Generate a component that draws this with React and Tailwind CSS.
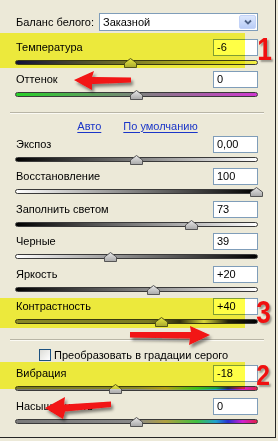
import React from 'react'

const rowsTop = [
  { label: 'Температура', value: '-6', pos: 130, h: 'h-[32px]', track: 'bg-[linear-gradient(to_right,#1010d0,#f4f040)]' },
  { label: 'Оттенок', value: '0', pos: 136, h: 'h-[33px]', track: 'bg-[linear-gradient(to_right,#28d028,#d038d0)]' },
]

const rowsMid = [
  { label: 'Экспоз', value: '0,00', pos: 136, h: 'h-[32px]', track: 'bg-[linear-gradient(to_right,#000,#fff)]' },
  { label: 'Восстановление', value: '100', pos: 256, h: 'h-[33px]', track: 'bg-[linear-gradient(to_right,#fff,#000)]' },
  { label: 'Заполнить светом', value: '73', pos: 191, h: 'h-[32px]', track: 'bg-[linear-gradient(to_right,#000,#fff)]' },
  { label: 'Черные', value: '39', pos: 110, h: 'h-[33px]', track: 'bg-[linear-gradient(to_right,#fff,#000)]' },
  { label: 'Яркость', value: '+20', pos: 153, h: 'h-[32px]', track: 'bg-[linear-gradient(to_right,#000,#fff)]' },
  { label: 'Контрастность', value: '+40', pos: 161, h: 'h-[33px]', track: 'bg-[linear-gradient(to_right,#8a8a8a,#7a7a7a_55%,#303030_68%,#d8d8d8_78%,#202020_88%,#000)]' },
]

const rowsBottom = [
  { label: 'Вибрация', value: '-18', pos: 115, h: 'h-[33px]', track: 'bg-[linear-gradient(to_right,#7a7a7a,#8a8a8a_50%,#b0a040_62%,#40c040_75%,#20a0d0_83%,#2830d0_88%,#d020d0_94%,#e02048)]' },
  { label: 'Насыщенность', value: '0', pos: 136, h: 'h-[33px]', track: 'bg-[linear-gradient(to_right,#7a7a7a,#8a8a8a_50%,#b0a040_62%,#40c040_75%,#20a0d0_83%,#2830d0_88%,#d020d0_94%,#e02048)]' },
]

function Thumb({ pos }) {
  return (
    <svg
      width="13"
      height="10"
      viewBox="0 0 13 10"
      className="absolute top-[2px]"
      style={{ left: pos - 15 - 6 }}
    >
      <defs>
        <linearGradient id="thumbfill" x1="0" y1="0" x2="0" y2="1">
          <stop offset="0" stopColor="#e8e8e8" />
          <stop offset="1" stopColor="#a8a8a8" />
        </linearGradient>
      </defs>
      <polygon points="0.5,5 6.5,0.5 12.5,5 12.5,9.5 0.5,9.5" fill="url(#thumbfill)" stroke="#555" strokeWidth="1" strokeLinejoin="round" />
    </svg>
  )
}

function SliderRow({ label, value, pos, h, track }) {
  return (
    <div className={`flex flex-col ${h}`}>
      <div className="flex items-center h-[17px] pl-[16px]">
        <span className="whitespace-nowrap">{label}</span>
        <div className="ml-auto mr-[17px] w-[45px] h-[17px] border border-[#7f9db9] bg-white pl-[3px] leading-[15px]">
          {value}
        </div>
      </div>
      <div className="relative ml-[15px] w-[243px] h-[12px]">
        <div className={`absolute left-0 right-0 top-[4px] h-[5px] rounded-full border border-[#3a3a3a] ${track}`} />
        <Thumb pos={pos} />
      </div>
    </div>
  )
}

function Separator() {
  return <div className="ml-[10px] w-[254px] h-[2px] border-t border-[#b8b5a6] border-b border-b-[#fbfaf4]" />
}

function App() {
  return (
    <div className="w-[278px] h-[441px] bg-[#ece9d8] font-['Liberation_Sans',sans-serif] text-[11px] text-black overflow-hidden">
      <div className="relative w-[276px] h-[438px] border-r border-b border-[#262626]">
        <div className="flex flex-col pt-[13px]">
          <div className="flex items-center h-[18px] pl-[16px]">
            <span className="whitespace-nowrap">Баланс белого:</span>
            <div className="ml-auto mr-[17px] w-[159px] shrink-0 h-[18px] border border-[#7f9db9] bg-white flex items-center pl-[3px] pr-[1px]">
              <span>Заказной</span>
              <div className="ml-auto w-[17px] h-[14px] rounded-[2px] border border-[#c3d3f8] bg-[linear-gradient(to_bottom,#dce7fd,#b9cdf7)] flex items-center justify-center">
                <svg width="8" height="6" viewBox="0 0 8 6">
                  <path d="M1 1.5 L4 4.5 L7 1.5" fill="none" stroke="#4d6185" strokeWidth="1.8" />
                </svg>
              </div>
            </div>
          </div>

          <div className="mt-[8px] flex flex-col">
            {rowsTop.map((r) => (
              <SliderRow key={r.label} {...r} />
            ))}
          </div>

          <div className="mt-[8px]">
            <Separator />
          </div>

          <div className="h-[22px] pt-[2px] flex items-center justify-center gap-[22px] text-[#1a35c8]">
            <span className="underline underline-offset-2">Авто</span>
            <span className="underline underline-offset-2">По умолчанию</span>
          </div>

          <div className="flex flex-col">
            {rowsMid.map((r) => (
              <SliderRow key={r.label} {...r} />
            ))}
          </div>

          <div className="mt-[8px]">
            <Separator />
          </div>

          <div className="h-[24px] pt-[4px] pl-[39px] flex items-center gap-[3px]">
            <div className="w-[12px] h-[12px] border border-[#1c5180] bg-[linear-gradient(135deg,#dcdcd7,#fff)]" />
            <span className="whitespace-nowrap">Преобразовать в градации серого</span>
          </div>

          <div className="flex flex-col">
            {rowsBottom.map((r) => (
              <SliderRow key={r.label} {...r} />
            ))}
          </div>
        </div>

        {/* marker highlights */}
        <div className="absolute left-0 top-[33px] w-[245px] h-[35px] bg-[#ffff46] mix-blend-multiply pointer-events-none" />
        <div className="absolute left-0 top-[298px] w-[245px] h-[30px] bg-[#ffff46] mix-blend-multiply pointer-events-none" />
        <div className="absolute left-0 top-[362px] w-[245px] h-[27px] bg-[#ffff46] mix-blend-multiply pointer-events-none" />

        {/* red numbers */}
        <span className="absolute left-[256px] top-[35px] text-[31px] leading-[30px] font-bold text-[#f01010] scale-x-[0.85] [text-shadow:2px_2px_2px_rgba(0,0,0,0.35)]">1</span>
        <span className="absolute left-[255px] top-[298px] text-[31px] leading-[30px] font-bold text-[#f01010] scale-x-[0.85] [text-shadow:2px_2px_2px_rgba(0,0,0,0.35)]">3</span>
        <span className="absolute left-[255px] top-[361px] text-[29px] leading-[28px] font-bold text-[#f01010] scale-x-[0.85] [text-shadow:2px_2px_2px_rgba(0,0,0,0.35)]">2</span>

        {/* red arrows */}
        <svg className="absolute left-0 top-0 pointer-events-none" width="278" height="441" viewBox="0 0 278 441">
          <defs>
            <filter id="ashadow" x="-20%" y="-50%" width="140%" height="200%">
              <feDropShadow dx="2" dy="3" stdDeviation="1.5" floodColor="#000" floodOpacity="0.45" />
            </filter>
          </defs>
          <g fill="#f21313" filter="url(#ashadow)">
            <path d="M74 80 L94 71 L92 77 L131 77.5 L131 82.5 L92 84 L92 90 Z" />
            <path d="M210 335 L190 326 L191 332 L130 332 L130 337.5 L190 338.5 L189 345 Z" />
            <path d="M45 408 L65 397 L64 404.5 L111 401.5 L111 407 L65 411.5 L63 419 Z" />
          </g>
        </svg>
      </div>
    </div>
  )
}

export default App
